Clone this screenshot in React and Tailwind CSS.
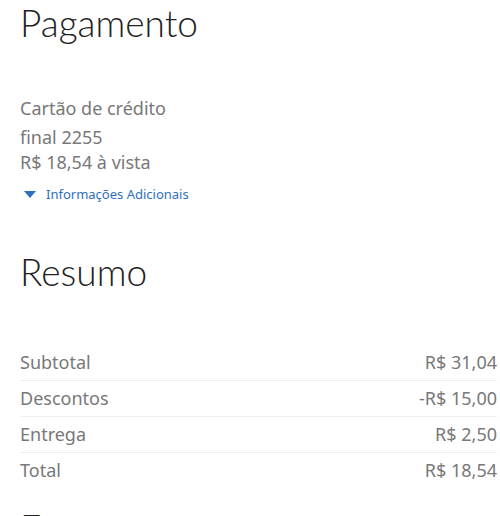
export default function App() {
  const rows = [
    ["Subtotal", "R$ 31,04"],
    ["Descontos", "-R$ 15,00"],
    ["Entrega", "R$ 2,50"],
    ["Total", "R$ 18,54"],
  ];
  return (
    <div className="w-[500px] h-[516px] overflow-hidden bg-white pl-5 pr-[3px]">
      <h1 className="font-['Lato',sans-serif] font-light text-[37px] leading-[44px] text-[#222] pt-[1px]">
        Pagamento
      </h1>
      <div className="mt-[50px] font-['Noto_Sans',sans-serif] text-[18px] text-[#787878] leading-[26px]">
        <div>Cartão de crédito</div>
        <div className="mt-[4px] leading-[25px]">final 2255</div>
        <div className="leading-[24px]">R$ 18,54 à vista</div>
      </div>
      <div className="mt-[11px] flex items-center gap-[10px] pl-[4px] font-['Noto_Sans',sans-serif] text-[13px] text-[#2f6fbf]">
        <svg width="12" height="7" viewBox="0 0 12 7">
          <polygon points="0,0 12,0 6,7" fill="#2f6fbf" />
        </svg>
        <span>Informações Adicionais</span>
      </div>
      <h1 className="mt-[45px] font-['Lato',sans-serif] font-light text-[37px] leading-[44px] text-[#222]">
        Resumo
      </h1>
      <div className="mt-[51px] font-['Noto_Sans',sans-serif] text-[18px] text-[#787878]">
        {rows.map(([l, v], i) => (
          <div
            key={l}
            className={`flex justify-between h-[36px] items-center ${i < 3 ? "border-b border-[#eee]" : ""}`}
          >
            <span>{l}</span>
            <span>{v}</span>
          </div>
        ))}
      </div>
      <h1 className="mt-[17px] font-['Lato',sans-serif] font-light text-[37px] leading-[44px] text-[#222]">
        Entrega
      </h1>
    </div>
  );
}
